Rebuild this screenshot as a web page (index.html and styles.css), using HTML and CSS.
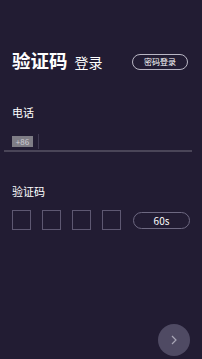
FILE: index.html
```html
<!DOCTYPE html>
<html lang="zh">
<head>
<meta charset="utf-8">
<link rel="stylesheet" href="styles.css">
</head>
<body>
<div class="page">
  <div class="header">
    <div class="title-group">
      <span class="title">验证码</span>
      <span class="subtitle">登录</span>
    </div>
    <div class="pill-btn">密码登录</div>
  </div>

  <div class="label label-phone">电话</div>
  <div class="phone-row">
    <span class="badge">+86</span>
    <span class="divider"></span>
  </div>
  <div class="underline"></div>

  <div class="label label-code">验证码</div>
  <div class="code-row">
    <div class="boxes">
      <span class="box"></span>
      <span class="box"></span>
      <span class="box"></span>
      <span class="box"></span>
    </div>
    <div class="timer">60s</div>
  </div>

  <div class="fab">
    <svg width="12" height="12" viewBox="0 0 12 12"><path d="M4 2 L8 6 L4 10" fill="none" stroke="#a9a6b6" stroke-width="1.2"/></svg>
  </div>
</div>
</body>
</html>
```

FILE: styles.css
```css
* { box-sizing: border-box; }
html, body { margin: 0; padding: 0; }
body {
  background: #221c33;
  font-family: "Noto Sans CJK SC", "Noto Sans", sans-serif;
  color: #ffffff;
}
.page {
  position: relative;
  width: 202px;
  height: 359px;
  padding: 49px 12px 0 12px;
  overflow: hidden;
}
.header {
  display: flex;
  align-items: center;
  justify-content: space-between;
  height: 24px;
  padding-right: 2px;
}
.title-group {
  display: flex;
  align-items: baseline;
}
.title {
  font-size: 18.5px;
  font-weight: 700;
  line-height: 24px;
}
.subtitle {
  font-size: 14px;
  line-height: 24px;
  margin-left: 7px;
}
.pill-btn {
  width: 56px;
  height: 16px;
  border: 1px solid #b9b6c4;
  border-radius: 8px;
  font-size: 8px;
  line-height: 14px;
  text-align: center;
  margin-top: 2px;
}
.label {
  font-size: 11px;
  line-height: 14px;
}
.label-phone { margin-top: 32px; }
.phone-row {
  display: flex;
  align-items: center;
  margin-top: 15px;
  height: 14px;
}
.badge {
  background: #7f7d86;
  color: #cfcdd4;
  font-size: 8px;
  line-height: 11px;
  height: 11px;
  width: 21px;
  text-align: center;
}
.divider {
  width: 1px;
  height: 15px;
  background: #3e3850;
  margin-left: 5px;
}
.underline {
  height: 2px;
  background: #4a4558;
  margin: 2px -2px 0 -8px;
}
.label-code { margin-top: 32px; }
.code-row {
  display: flex;
  align-items: center;
  justify-content: space-between;
  margin-top: 12px;
}
.boxes {
  display: flex;
  gap: 11px;
}
.box {
  width: 19px;
  height: 20px;
  border: 1px solid #5e5872;
}
.timer {
  width: 57px;
  height: 17px;
  border: 1px solid #6e6982;
  border-radius: 9px;
  font-size: 10px;
  line-height: 15px;
  text-align: center;
}
.fab {
  position: absolute;
  left: 158px;
  top: 324px;
  width: 32px;
  height: 32px;
  border-radius: 50%;
  background: #4f4a63;
  display: flex;
  align-items: center;
  justify-content: center;
}
```
